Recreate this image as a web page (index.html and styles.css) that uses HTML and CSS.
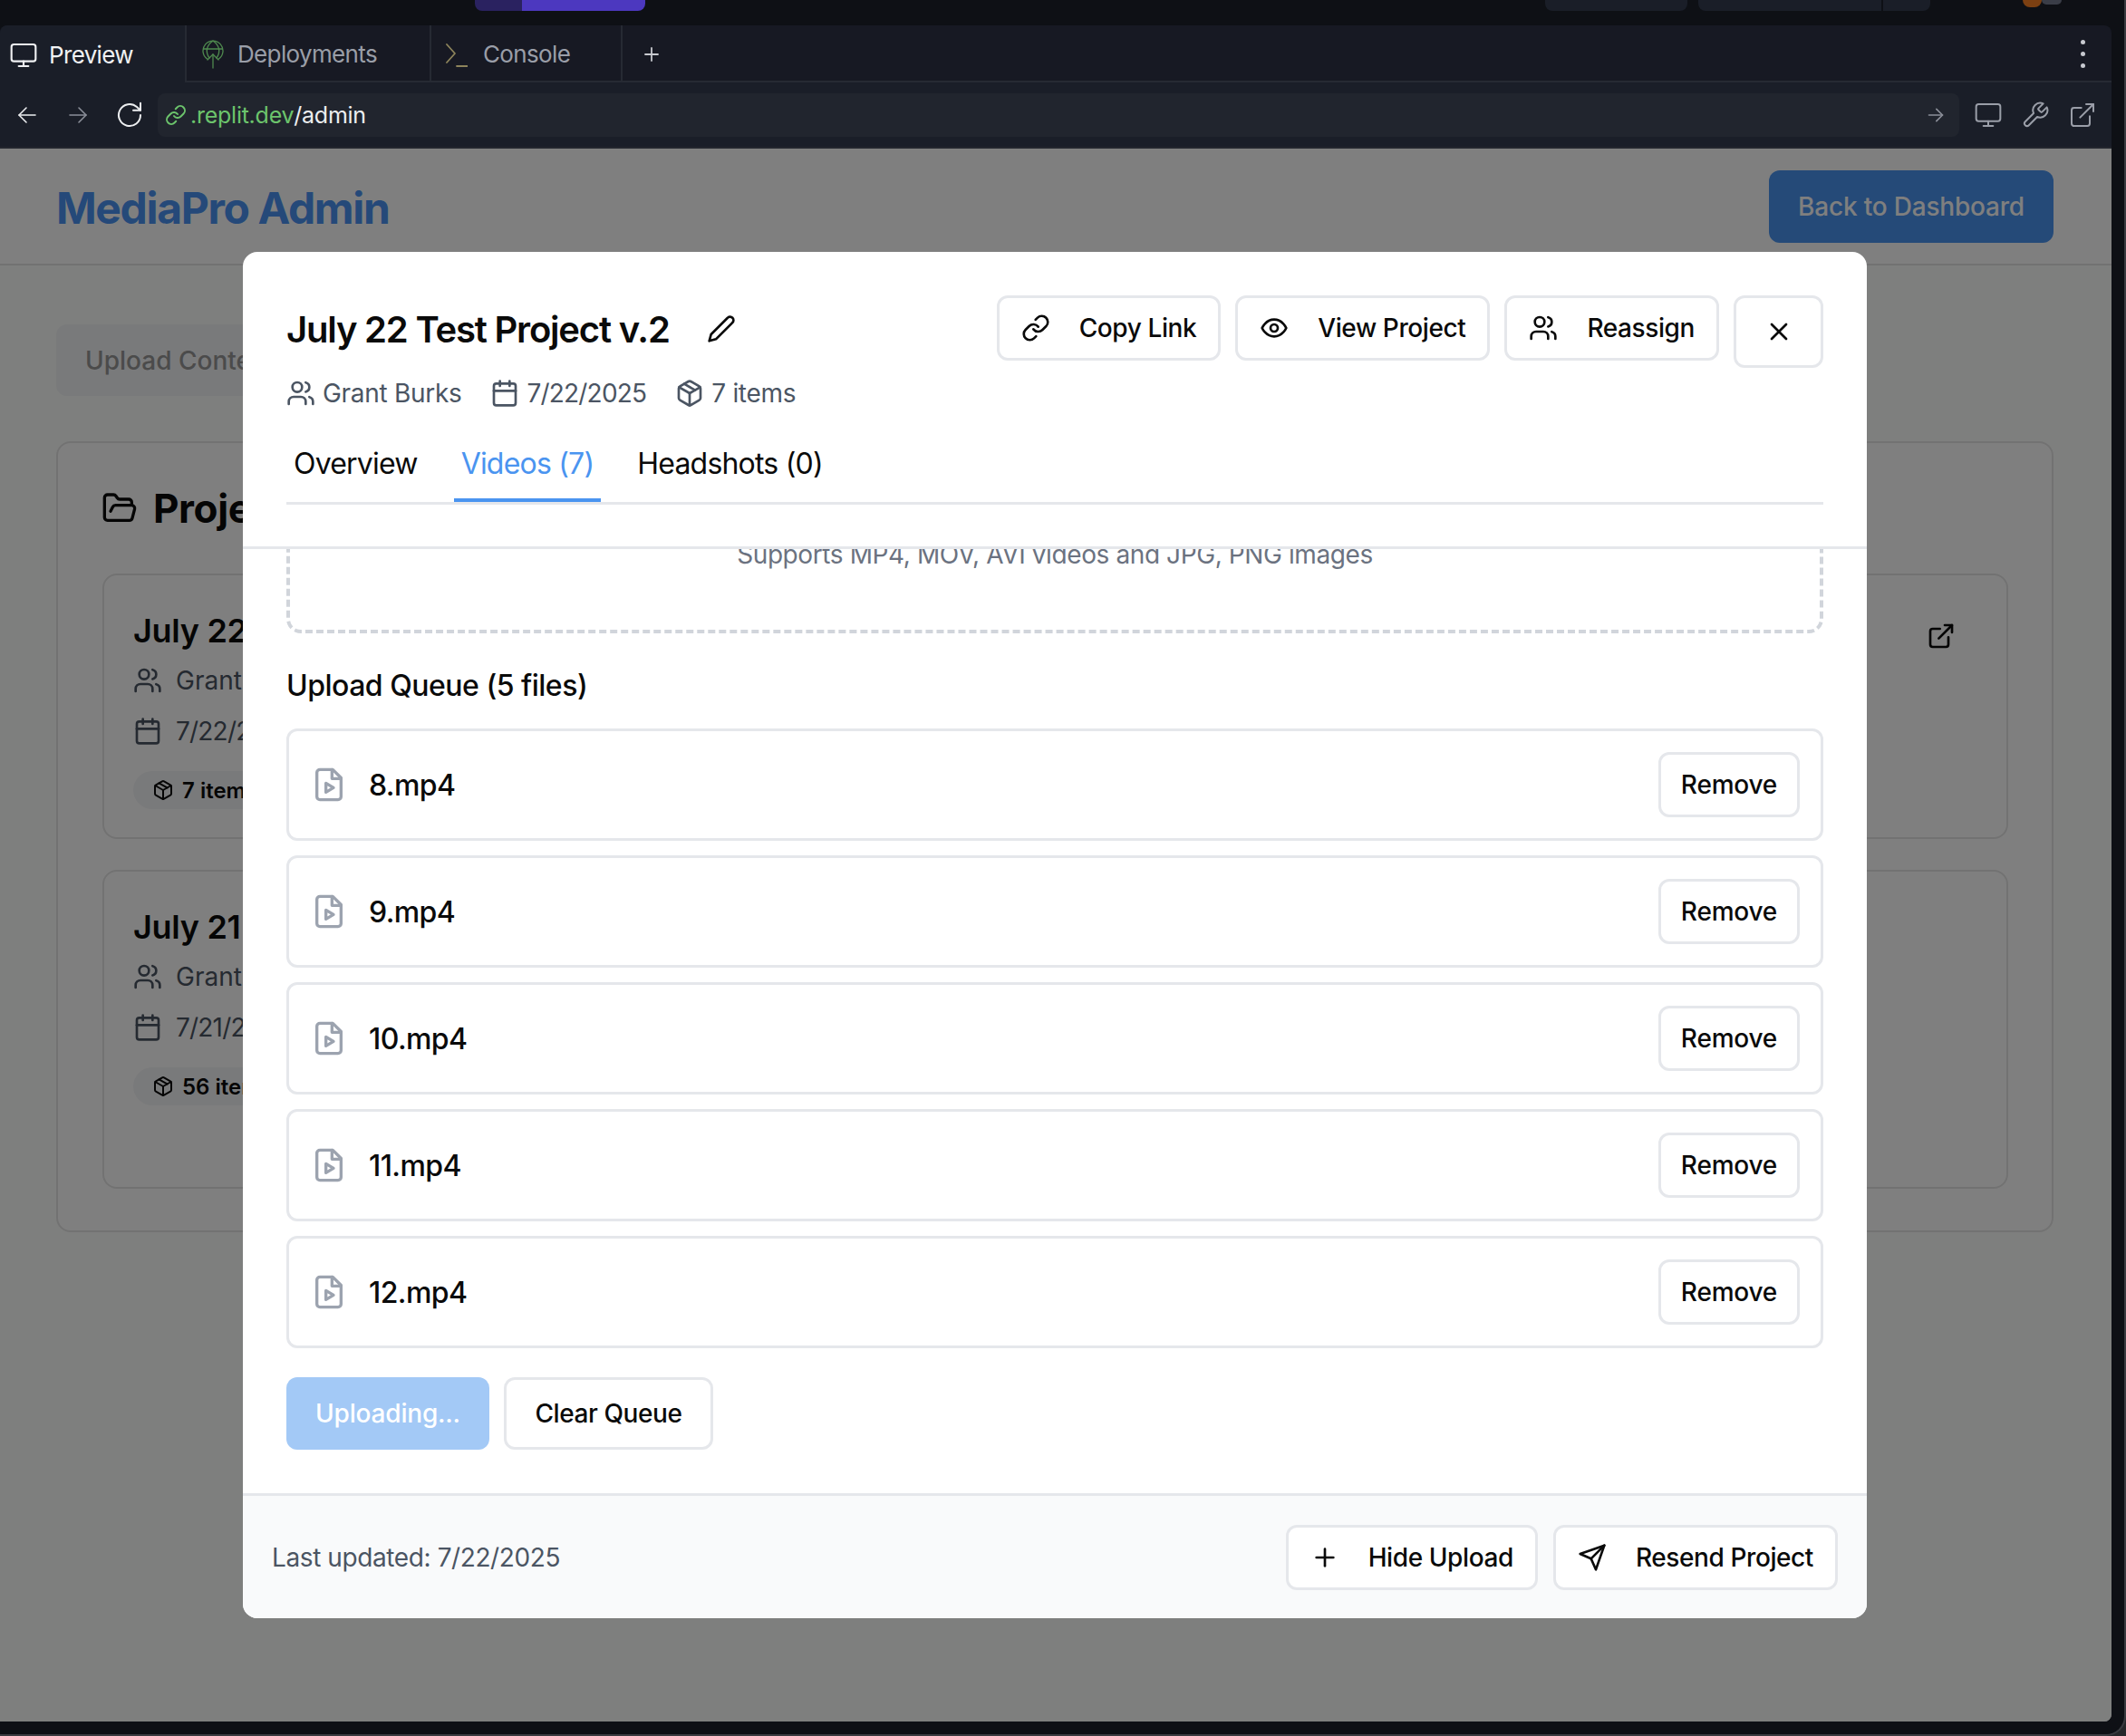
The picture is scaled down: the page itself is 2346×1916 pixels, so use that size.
FILE: index.html
```html
<!DOCTYPE html>
<html lang="en">
<head>
    <meta charset="UTF-8">
    <meta name="viewport" content="width=device-width, initial-scale=1.0">
    <title>MediaPro Admin</title>
    <link rel="stylesheet" href="styles.css">
</head>
<body>
<svg class="sprite" aria-hidden="true">
    <symbol id="i-monitor" viewBox="0 0 24 24"><rect width="20" height="14" x="2" y="3" rx="2"/><line x1="8" x2="16" y1="21" y2="21"/><line x1="12" x2="12" y1="17" y2="21"/></symbol>
    <symbol id="i-users" viewBox="0 0 24 24"><path d="M16 21v-2a4 4 0 0 0-4-4H6a4 4 0 0 0-4 4v2"/><circle cx="9" cy="7" r="4"/><path d="M22 21v-2a4 4 0 0 0-3-3.87"/><path d="M16 3.13a4 4 0 0 1 0 7.75"/></symbol>
    <symbol id="i-calendar" viewBox="0 0 24 24"><rect width="18" height="18" x="3" y="4" rx="2"/><line x1="16" x2="16" y1="2" y2="6"/><line x1="8" x2="8" y1="2" y2="6"/><line x1="3" x2="21" y1="10" y2="10"/></symbol>
    <symbol id="i-package" viewBox="0 0 24 24"><path d="m7.5 4.27 9 5.15"/><path d="M21 8a2 2 0 0 0-1-1.73l-7-4a2 2 0 0 0-2 0l-7 4A2 2 0 0 0 3 8v8a2 2 0 0 0 1 1.73l7 4a2 2 0 0 0 2 0l7-4A2 2 0 0 0 21 16Z"/><path d="m3.3 7 8.7 5 8.7-5"/><path d="M12 22V12"/></symbol>
    <symbol id="i-link" viewBox="0 0 24 24"><path d="M10 13a5 5 0 0 0 7.54.54l3-3a5 5 0 0 0-7.07-7.07l-1.72 1.71"/><path d="M14 11a5 5 0 0 0-7.54-.54l-3 3a5 5 0 0 0 7.07 7.07l1.71-1.71"/></symbol>
    <symbol id="i-eye" viewBox="0 0 24 24"><path d="M2 12s3-7 10-7 10 7 10 7-3 7-10 7-10-7-10-7Z"/><circle cx="12" cy="12" r="3"/></symbol>
    <symbol id="i-x" viewBox="0 0 24 24"><path d="M18 6 6 18"/><path d="m6 6 12 12"/></symbol>
    <symbol id="i-pencil" viewBox="0 0 24 24"><path d="M17 3a2.85 2.83 0 1 1 4 4L7.5 20.5 2 22l1.5-5.5Z"/></symbol>
    <symbol id="i-plus" viewBox="0 0 24 24"><path d="M5 12h14"/><path d="M12 5v14"/></symbol>
    <symbol id="i-send" viewBox="0 0 24 24"><path d="m22 2-7 20-4-9-9-4Z"/><path d="M22 2 11 13"/></symbol>
    <symbol id="i-video" viewBox="0 0 24 24"><path d="M14.5 2H6a2 2 0 0 0-2 2v16a2 2 0 0 0 2 2h12a2 2 0 0 0 2-2V7.5L14.5 2z"/><polyline points="14 2 14 8 20 8"/><path d="m10 11 5 3-5 3v-6z"/></symbol>
    <symbol id="i-folder" viewBox="0 0 24 24"><path d="m6 14 1.45-2.9A2 2 0 0 1 9.24 10H20a2 2 0 0 1 1.94 2.5l-1.55 6a2 2 0 0 1-1.94 1.5H4a2 2 0 0 1-2-2V5c0-1.1.9-2 2-2h3.93a2 2 0 0 1 1.66.9l.82 1.2a2 2 0 0 0 1.66.9H18a2 2 0 0 1 2 2v2"/></symbol>
    <symbol id="i-external" viewBox="0 0 24 24"><path d="M18 13v6a2 2 0 0 1-2 2H5a2 2 0 0 1-2-2V8a2 2 0 0 1 2-2h6"/><polyline points="15 3 21 3 21 9"/><line x1="10" x2="21" y1="14" y2="3"/></symbol>
    <symbol id="i-arrow" viewBox="0 0 24 24"><path d="M3 12h18"/><path d="m13 4 8 8-8 8"/></symbol>
    <symbol id="i-wrench" viewBox="0 0 24 24"><path d="M14.7 6.3a1 1 0 0 0 0 1.4l1.6 1.6a1 1 0 0 0 1.4 0l3.77-3.77a6 6 0 0 1-7.94 7.94l-6.91 6.91a2.12 2.12 0 0 1-3-3l6.91-6.91a6 6 0 0 1 7.94-7.94l-3.76 3.76z"/></symbol>
    <symbol id="i-reload" viewBox="0 0 24 24"><path d="M21 12a9 9 0 1 1-3-6.7L21 8"/><path d="M21 2v6h-6"/></symbol>
</svg>

<div class="window">
    <div class="topbar">
        <div class="purple-tab"><span class="purple-a"></span><span class="purple-b"></span></div>
        <div class="chip chip-one"></div>
        <div class="chip chip-two"></div>
        <div class="chip chip-three"></div>
        <div class="alert-dot"></div>
        <div class="avatar-dot"></div>
    </div>

    <div class="tabbar">
        <div class="ptab ptab-active">
            <svg class="ticon"><use href="#i-monitor"/></svg>
            <span>Preview</span>
        </div>
        <div class="ptab ptab-deploy">
            <svg class="ticon-green" viewBox="0 0 24 32">
                <path d="M6 21.3a11 11 0 1 1 12 0"/><path d="M1.5 10h21"/><path d="M8 20c-4-6-4-13 4-19 8 6 8 13 4 19"/><path d="M12 31V16"/><path d="m6 22 6-6 6 6"/>
            </svg>
            <span>Deployments</span>
        </div>
        <div class="ptab ptab-console">
            <svg class="ticon-olive" viewBox="0 0 24 32">
                <path d="m1 5 9 10-9 10"/><path d="M12 29h12"/>
            </svg>
            <span>Console</span>
        </div>
        <div class="ptab-rest">
            <svg class="plus-icon"><use href="#i-plus"/></svg>
            <div class="kebab"><i></i><i></i><i></i></div>
        </div>
    </div>

    <div class="urlrow">
        <svg class="nav-icon nav-back"><use href="#i-arrow"/></svg>
        <svg class="nav-icon nav-forward"><use href="#i-arrow"/></svg>
        <svg class="nav-reload"><use href="#i-reload"/></svg>
        <div class="urlbox">
            <svg class="url-link"><use href="#i-link"/></svg>
            <span class="url-host">.replit.dev</span><span class="url-path">/admin</span>
            <svg class="url-go"><use href="#i-arrow"/></svg>
        </div>
        <svg class="tool-icon"><use href="#i-monitor"/></svg>
        <svg class="tool-icon"><use href="#i-wrench"/></svg>
        <svg class="tool-icon"><use href="#i-external"/></svg>
    </div>

    <div class="preview">
        <header class="page-head">
            <h1 class="brand">MediaPro Admin</h1>
            <button class="back-btn">Back to Dashboard</button>
        </header>
        <main class="page-main">
            <div class="upload-pill">Upload Content</div>
            <section class="projects">
                <h2 class="projects-title"><svg class="ic-folder"><use href="#i-folder"/></svg>Projects</h2>
                <div class="proj-card">
                    <div>
                        <h3 class="proj-name">July 22 Test Project v.2</h3>
                        <div class="proj-row"><svg class="ic-proj"><use href="#i-users"/></svg>Grant Burks</div>
                        <div class="proj-row proj-row-2"><svg class="ic-proj"><use href="#i-calendar"/></svg>7/22/2025</div>
                        <div class="proj-badge"><svg class="ic-badge"><use href="#i-package"/></svg>7 items</div>
                    </div>
                    <svg class="ic-open"><use href="#i-external"/></svg>
                </div>
                <div class="proj-card proj-card-tall">
                    <div>
                        <h3 class="proj-name">July 21 Test Project</h3>
                        <div class="proj-row"><svg class="ic-proj"><use href="#i-users"/></svg>Grant Burks</div>
                        <div class="proj-row proj-row-2"><svg class="ic-proj"><use href="#i-calendar"/></svg>7/21/2025</div>
                        <div class="proj-badge"><svg class="ic-badge"><use href="#i-package"/></svg>56 items</div>
                    </div>
                </div>
            </section>
        </main>

        <div class="overlay">
            <div class="modal">
                <div class="modal-head">
                    <div class="head-top">
                        <div>
                            <div class="title-row">
                                <h2 class="modal-title">July 22 Test Project v.2</h2>
                                <svg class="ic-edit"><use href="#i-pencil"/></svg>
                            </div>
                            <div class="meta">
                                <span class="meta-item"><svg class="ic-meta"><use href="#i-users"/></svg>Grant Burks</span>
                                <span class="meta-item meta-date"><svg class="ic-meta"><use href="#i-calendar"/></svg>7/22/2025</span>
                                <span class="meta-item"><svg class="ic-meta"><use href="#i-package"/></svg>7 items</span>
                            </div>
                        </div>
                        <div class="head-actions">
                            <button class="btn"><svg class="ic-btn"><use href="#i-link"/></svg>Copy Link</button>
                            <button class="btn"><svg class="ic-btn"><use href="#i-eye"/></svg>View Project</button>
                            <button class="btn"><svg class="ic-btn"><use href="#i-users"/></svg>Reassign</button>
                            <button class="btn btn-close"><svg class="ic-btn"><use href="#i-x"/></svg></button>
                        </div>
                    </div>
                    <div class="tabs">
                        <div class="tab">Overview</div>
                        <div class="tab tab-on">Videos (7)</div>
                        <div class="tab">Headshots (0)</div>
                    </div>
                </div>

                <div class="modal-body">
                    <div class="dropzone">Supports MP4, MOV, AVI videos and JPG, PNG images</div>
                    <h3 class="queue-title">Upload Queue (5 files)</h3>
                    <div class="queue">
                        <div class="file-row"><svg class="ic-file"><use href="#i-video"/></svg><span class="file-name">8.mp4</span><button class="btn btn-remove">Remove</button></div>
                        <div class="file-row"><svg class="ic-file"><use href="#i-video"/></svg><span class="file-name">9.mp4</span><button class="btn btn-remove">Remove</button></div>
                        <div class="file-row"><svg class="ic-file"><use href="#i-video"/></svg><span class="file-name">10.mp4</span><button class="btn btn-remove">Remove</button></div>
                        <div class="file-row"><svg class="ic-file"><use href="#i-video"/></svg><span class="file-name">11.mp4</span><button class="btn btn-remove">Remove</button></div>
                        <div class="file-row"><svg class="ic-file"><use href="#i-video"/></svg><span class="file-name">12.mp4</span><button class="btn btn-remove">Remove</button></div>
                    </div>
                    <div class="queue-actions">
                        <button class="btn-uploading">Uploading...</button>
                        <button class="btn btn-clear">Clear Queue</button>
                    </div>
                </div>

                <div class="modal-foot">
                    <span class="updated">Last updated: 7/22/2025</span>
                    <div class="foot-actions">
                        <button class="btn"><svg class="ic-btn"><use href="#i-plus"/></svg>Hide Upload</button>
                        <button class="btn"><svg class="ic-btn"><use href="#i-send"/></svg>Resend Project</button>
                    </div>
                </div>
            </div>
        </div>
    </div>
</div>
</body>
</html>
```

FILE: styles.css
```css
*{
    box-sizing: border-box;
}
html,body{
    margin: 0;
    height: 1916px;
    overflow: hidden;
}
body{
    background-color: #26272a;
    font-family: "Inter", "Liberation Sans", sans-serif;
    color: #0a0a0a;
}
h1,h2,h3{
    margin: 0;
}
button{
    font-family: inherit;
}
svg{
    flex: none;
    fill: none;
    stroke: currentColor;
    stroke-width: 2;
    stroke-linecap: round;
    stroke-linejoin: round;
}
.sprite{
    width: 0;
    height: 0;
    display: block;
}

.window{
    width: 2346px;
    height: 1916px;
    background-color: #0e1015;
    border-right: 2px solid #3a3b40;
    border-bottom: 2px solid #3a3b40;
    border-bottom-right-radius: 22px;
}

/* replit chrome */
.topbar{
    height: 28px;
    width: 2330px;
    display: flex;
    position: relative;
}
.purple-tab{
    display: flex;
    margin-left: 524px;
    height: 12px;
    width: 188px;
    border-radius: 0 0 8px 8px;
    overflow: hidden;
}
.purple-a{
    width: 52px;
    background-color: #2a2260;
}
.purple-b{
    flex: 1;
    background-color: #4c38bf;
}
.chip{
    height: 12px;
    background-color: #1a1e28;
    border-radius: 0 0 8px 8px;
}
.chip-one{
    margin-left: 993px;
    width: 157px;
}
.chip-two{
    margin-left: 12px;
    width: 202px;
    border-radius: 0 0 0 8px;
}
.chip-three{
    margin-left: 2px;
    width: 52px;
    border-radius: 0 0 8px 0;
}
.alert-dot{
    width: 21px;
    height: 8px;
    margin-left: 102px;
    background-color: #7c4012;
    border-radius: 0 0 11px 11px;
}
.avatar-dot{
    width: 22px;
    height: 5px;
    background-color: #3a3d47;
    border-radius: 0 0 11px 11px;
}

.tabbar{
    height: 63px;
    width: 2330px;
    display: flex;
    background-color: #171923;
    border-radius: 8px 8px 0 0;
    font-size: 26px;
    letter-spacing: -0.65px;
    color: #9a9ea8;
}
.ptab{
    height: 63px;
    display: flex;
    align-items: center;
    padding-top: 2px;
    border-bottom: 2px solid #262a33;
    border-right: 2px solid #262a33;
}
.ptab-active{
    width: 206px;
    padding-left: 10px;
    gap: 12px;
    color: #f0f1f3;
    background-color: #1a1e28;
    border-bottom: none;
    border-top-left-radius: 8px;
}
.ptab-deploy{
    width: 270px;
    padding-left: 17px;
    gap: 15px;
}
.ptab-console{
    width: 211px;
    padding-left: 16px;
    gap: 17px;
}
.ptab-rest{
    flex: 1;
    display: flex;
    align-items: center;
    justify-content: space-between;
    padding: 2px 29px 0 20px;
    border-bottom: 2px solid #262a33;
}
.ticon{
    width: 32px;
    height: 32px;
    stroke-width: 1.6;
}
.ticon-green{
    width: 24px;
    height: 32px;
    color: #4f8a4f;
    stroke-width: 1.3;
}
.ticon-olive{
    width: 24px;
    height: 32px;
    color: #8d845b;
    stroke-width: 1.8;
}
.plus-icon{
    width: 24px;
    height: 24px;
    color: #c8cad0;
    stroke-width: 1.8;
}
.kebab{
    display: flex;
    flex-direction: column;
    gap: 8px;
}
.kebab i{
    width: 5px;
    height: 5px;
    border-radius: 50%;
    background-color: #c8cad0;
}

.urlrow{
    height: 73px;
    width: 2330px;
    display: flex;
    align-items: center;
    background-color: #1a1e28;
    border-bottom: 2px solid #23262e;
}
.nav-icon{
    width: 24px;
    height: 24px;
    stroke-width: 1.6;
}
.nav-back{
    margin-left: 18px;
    color: #eceef0;
    transform: scaleX(-1);
}
.nav-forward{
    margin-left: 32px;
    color: #8b8f99;
}
.nav-reload{
    width: 32px;
    height: 32px;
    margin-left: 29px;
    color: #eceef0;
    stroke-width: 1.5;
}
.urlbox{
    width: 1988px;
    height: 48px;
    margin-left: 15px;
    display: flex;
    align-items: center;
    background-color: #21252e;
    border-radius: 8px;
    padding: 0 16px 0 8px;
    font-size: 25px;
    letter-spacing: -0.25px;
}
.url-link{
    width: 24px;
    height: 24px;
    color: #6cc46c;
    margin-right: 4px;
}
.url-host{
    color: #6cc46c;
}
.url-path{
    color: #eceef0;
}
.url-go{
    width: 20px;
    height: 20px;
    margin-left: auto;
    color: #8b8f99;
}
.tool-icon{
    width: 32px;
    height: 32px;
    margin-left: 20px;
    color: #9a9ea8;
    stroke-width: 1.5;
}
.urlbox + .tool-icon{
    margin-left: 16px;
}

/* page behind the dialog */
.preview{
    position: relative;
    width: 2330px;
    height: 1736px;
    background-color: #fcfefc;
    border-bottom-right-radius: 8px;
    overflow: hidden;
}
.page-head{
    height: 129px;
    background-color: #fff;
    border-bottom: 2px solid #e5e5e5;
    display: flex;
    align-items: center;
    justify-content: space-between;
    padding: 0 64px 0 62px;
}
.brand{
    margin-top: 3px;
    font-size: 48px;
    font-weight: 700;
    color: #4a93f2;
    letter-spacing: -1.35px;
}
.back-btn{
    width: 314px;
    height: 80px;
    border: none;
    border-radius: 12px;
    background-color: #4a94f0;
    color: #fff;
    font-size: 28px;
    font-weight: 500;
    letter-spacing: -0.2px;
}
.page-main{
    padding: 65px 64px 0 62px;
}
.upload-pill{
    width: 400px;
    height: 79px;
    padding-left: 32px;
    display: flex;
    align-items: center;
    border-radius: 12px;
    background-color: #f3f4f6;
    color: #969696;
    font-size: 28px;
    font-weight: 500;
}
.projects{
    height: 873px;
    margin-top: 50px;
    padding: 44px 48px 0 49px;
    background-color: #fff;
    border: 2px solid #e5e5e5;
    border-radius: 16px;
}
.projects-title{
    height: 56px;
    display: flex;
    align-items: center;
    gap: 17px;
    font-size: 44px;
    font-weight: 700;
    letter-spacing: -0.4px;
}
.ic-folder{
    width: 40px;
    height: 40px;
    margin-left: -1px;
}
.proj-card{
    height: 293px;
    margin-top: 44px;
    padding: 37px 56px 0 32px;
    display: flex;
    justify-content: space-between;
    background-color: #fff;
    border: 2px solid #e5e5e5;
    border-radius: 16px;
}
.proj-card-tall{
    height: 352px;
    margin-top: 34px;
}
.proj-name{
    height: 48px;
    line-height: 48px;
    font-size: 36px;
    font-weight: 600;
    letter-spacing: -0.3px;
}
.proj-row{
    height: 40px;
    margin-top: 11px;
    display: flex;
    align-items: center;
    gap: 15px;
    font-size: 28px;
    color: #4b5563;
}
.proj-row-2{
    margin-top: 16px;
    letter-spacing: -0.8px;
}
.ic-proj{
    width: 32px;
    height: 32px;
}
.proj-badge{
    width: 200px;
    height: 42px;
    margin-top: 24px;
    padding-left: 21px;
    display: flex;
    align-items: center;
    gap: 9px;
    border-radius: 21px;
    background-color: #f3f4f6;
    font-size: 24px;
    font-weight: 600;
}
.ic-badge{
    width: 24px;
    height: 24px;
}
.ic-open{
    width: 32px;
    height: 32px;
    margin-top: 14px;
}

.overlay{
    position: absolute;
    inset: 0;
    padding-right: 2px;
    background-color: rgba(0,0,0,0.5);
    display: flex;
    align-items: center;
    justify-content: center;
}

/* dialog */
.modal{
    width: 1792px;
    height: 1508px;
    display: flex;
    flex-direction: column;
    background-color: #fff;
    border-radius: 16px;
    overflow: hidden;
}
.modal-head{
    flex: none;
    height: 328px;
    padding: 48px 48px 0;
    border-bottom: 3px solid #e5e7eb;
}
.head-top{
    display: flex;
    justify-content: space-between;
    align-items: flex-start;
}
.title-row{
    height: 74px;
    display: flex;
    align-items: center;
    gap: 41px;
}
.modal-title{
    font-size: 40px;
    font-weight: 600;
    letter-spacing: -1.2px;
}
.ic-edit{
    width: 32px;
    height: 32px;
}
.meta{
    height: 40px;
    margin-top: 14px;
    display: flex;
    gap: 32px;
    font-size: 28px;
    letter-spacing: -0.3px;
    color: #4b5563;
}
.meta-item{
    display: flex;
    align-items: center;
    gap: 8px;
}
.meta-date{
    letter-spacing: -0.8px;
}
.ic-meta{
    width: 32px;
    height: 32px;
}
.head-actions{
    display: flex;
    align-items: flex-start;
    gap: 16px;
}
.btn{
    height: 72px;
    padding: 0 24px;
    display: flex;
    align-items: center;
    gap: 32px;
    background-color: #fff;
    border: 3px solid #e5e7eb;
    border-radius: 12px;
    color: #0a0a0a;
    font-size: 28px;
    font-weight: 500;
    letter-spacing: -0.4px;
    white-space: nowrap;
}
.ic-btn{
    width: 32px;
    height: 32px;
}
.btn-close{
    width: 99px;
    height: 80px;
    justify-content: center;
    padding: 0;
}
.tabs{
    height: 87px;
    margin-top: 16px;
    display: flex;
    gap: 32px;
    border-bottom: 3px solid #e5e7eb;
}
.tab{
    height: 84px;
    padding: 22px 8px 0;
    font-size: 32px;
    line-height: 40px;
    letter-spacing: -0.8px;
}
.tab-on{
    color: #4a94f0;
    border-bottom: 4px solid #4a94f0;
}

.modal-body{
    flex: 1;
    min-height: 0;
    overflow: hidden;
    padding: 0 48px;
}
.dropzone{
    height: 300px;
    margin-top: -207px;
    padding-bottom: 63px;
    display: flex;
    align-items: flex-end;
    justify-content: center;
    border: 4px dashed #d1d5db;
    border-radius: 16px;
    color: #6b7280;
    font-size: 28px;
    line-height: 40px;
    letter-spacing: -0.4px;
}
.queue-title{
    height: 48px;
    line-height: 48px;
    margin-top: 34px;
    font-size: 32px;
    font-weight: 500;
    letter-spacing: -0.5px;
}
.queue{
    margin-top: 23px;
    display: flex;
    flex-direction: column;
    gap: 16px;
}
.file-row{
    height: 124px;
    padding: 0 23px 0 24px;
    display: flex;
    align-items: center;
    border: 3px solid #e5e7eb;
    border-radius: 12px;
}
.ic-file{
    width: 40px;
    height: 40px;
    color: #9ca3af;
}
.file-name{
    margin-left: 24px;
    font-size: 32px;
    font-weight: 500;
    letter-spacing: -0.6px;
}
.btn-remove{
    width: 156px;
    margin-left: auto;
    padding: 0;
    justify-content: center;
    letter-spacing: -0.2px;
}
.queue-actions{
    margin-top: 32px;
    display: flex;
    gap: 16px;
}
.btn-uploading{
    width: 224px;
    height: 80px;
    border: none;
    border-radius: 12px;
    background-color: #a3c9f6;
    color: #fff;
    font-size: 28px;
    font-weight: 500;
    letter-spacing: -0.2px;
}
.btn-clear{
    height: 80px;
    width: 231px;
    justify-content: center;
    padding: 0;
}

.modal-foot{
    flex: none;
    height: 138px;
    padding: 0 32px;
    display: flex;
    align-items: center;
    justify-content: space-between;
    background-color: #f9fafb;
    border-top: 3px solid #e5e7eb;
}
.updated{
    font-size: 28px;
    letter-spacing: -0.4px;
    color: #4b5563;
}
.foot-actions{
    display: flex;
    gap: 17px;
}
```
